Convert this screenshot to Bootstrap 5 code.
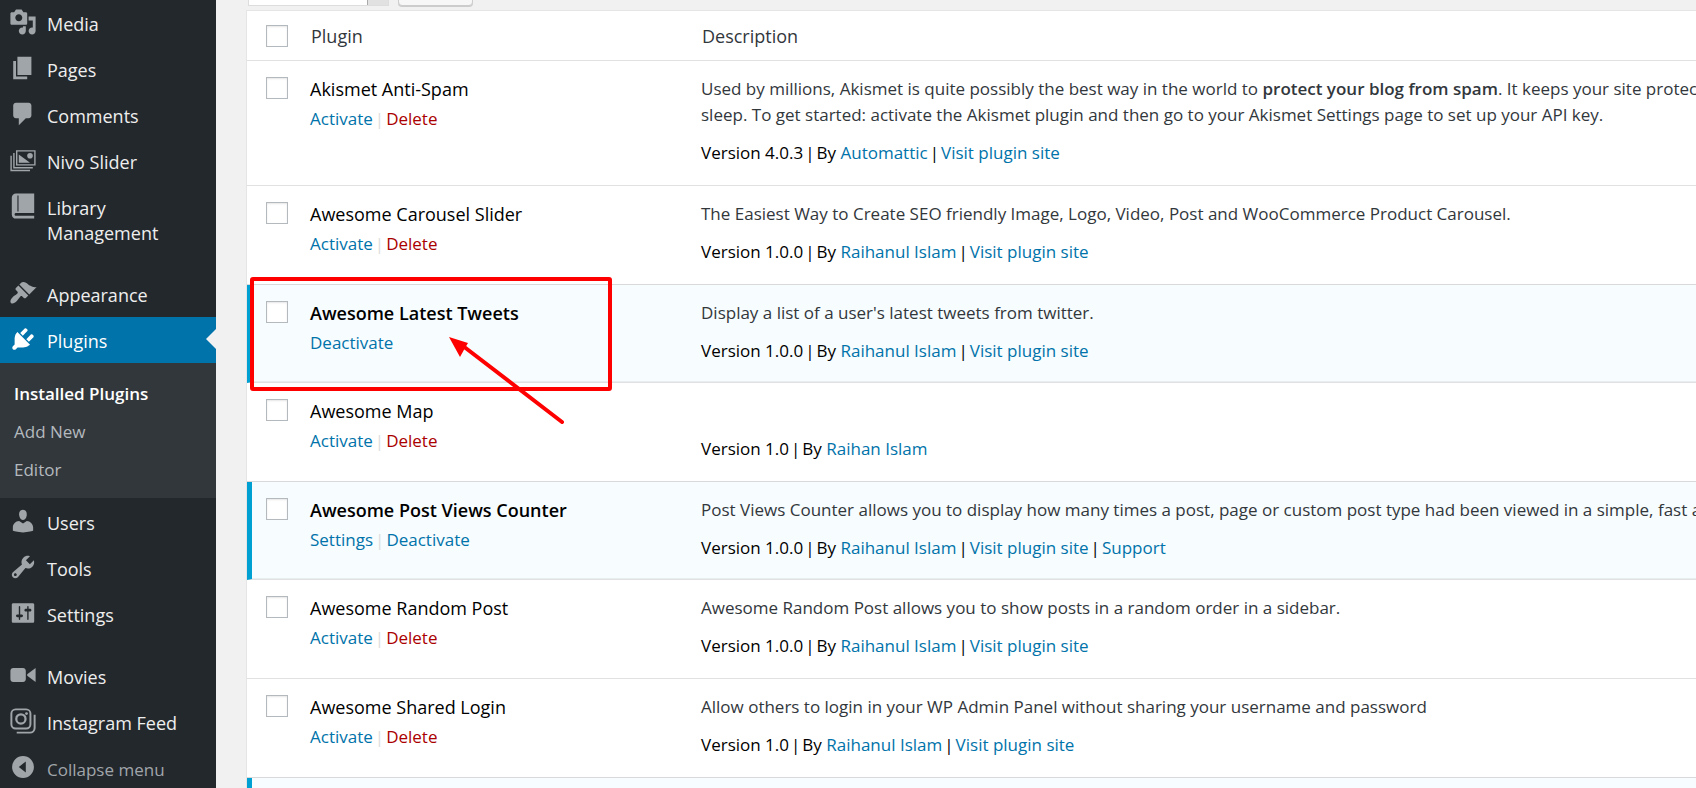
<!DOCTYPE html>
<html lang="en">
<head>
<meta charset="utf-8">
<meta name="viewport" content="width=device-width, initial-scale=1">
<title>Plugins</title>
<link href="https://cdn.jsdelivr.net/npm/bootstrap@5.3.0/dist/css/bootstrap.min.css" rel="stylesheet">
<style>
  body { font-family: "Open Sans", "Noto Sans", sans-serif; font-size: 17px; line-height: 26px; color: #32373c; background: #f1f1f1; }
  a { text-decoration: none; color: #0073aa; }
  .shell { height: 100vh; }

  /* Sidebar */
  .admin-menu { width: 216px; background: #23282d; font-size: 18px; line-height: 25px; }
  .menu-item { display: flex; align-items: flex-start; padding: 12px 8px 9px 9px; color: #eee; position: relative; }
  .menu-item svg { width: 28px; height: 28px; margin: -4px 10px 0 0; flex: none; fill: #a0a5aa; }
  .menu-item.current { background: #0073aa; color: #fff; }
  .menu-item.current svg { fill: #fff; }
  .menu-item.current::after { content: ""; position: absolute; right: 0; top: 12px; border: 10px solid transparent; border-right-color: #f1f1f1; border-left: 0; }
  .menu-gap { height: 16px; }
  .submenu { background: #32373c; font-size: 17px; padding: 12px 14px 9px; margin-bottom: 1px; }
  .submenu a { display: block; line-height: 38px; color: #b4b9be; }
  .submenu a.current { color: #fff; font-weight: 600; }
  .collapse-btn { border: 0; background: none; width: 100%; text-align: left; color: #a0a5aa; font-size: 17px; }

  /* Bulk actions */
  .bulk-bar { height: 10px; padding: 0 0 4px 2px; gap: 9px; }
  .bulk-select { width: 141px; height: 39px; border: 1px solid #ddd; border-radius: 0; background: linear-gradient(#aaa, #aaa) right 20px top 0 / 1px 100% no-repeat, linear-gradient(#e1e1e1, #e1e1e1) right / 20px 100% no-repeat #fff; appearance: none; }
  .bulk-apply { width: 75px; height: 39px; border: 1px solid #ccc; border-radius: 4px; background: #f7f7f7; box-shadow: 0 1px 0 #ccc; color: #555; }

  /* Plugin list */
  .list-area { padding-left: 30px; }
  .plugin-table { width: 120%; table-layout: fixed; border-collapse: separate; border-spacing: 0; background: #fff; border: 1px solid #e5e5e5; white-space: nowrap; }
  .col-tick { width: 53px; }
  .col-name { width: 391px; }
  .plugin-table th, .plugin-table td { vertical-align: top; font-weight: 400; border-bottom: 1px solid #e1e1e1; padding: 15px 10px 19px; }
  .plugin-table thead th { padding: 13px 11px 11px; font-size: 18px; line-height: 25px; }
  .plugin-table .tick { padding: 16px 0 0 19px; }
  .plugin-table thead .tick { padding-top: 14px; }
  .tick input { display: block; appearance: none; width: 22px; height: 22px; border: 1px solid #b4b9be; background: #fff; box-shadow: inset 0 1px 2px rgba(0,0,0,.1); margin: 0; }
  .plugin-table .on > * { background: #f7fcfe; padding-bottom: 18px; box-shadow: inset 0 -1px 0 rgba(0,0,0,.06), 0 -1px 0 rgba(0,0,0,.03); }
  .plugin-table .on .tick { border-left: 5px solid #00a0d2; padding-left: 14px; }
  .plugin-name { font-size: 18px; line-height: 27px; color: #000; padding-bottom: 3px; }
  .on .plugin-name { font-weight: 600; }
  .row-links { color: #ddd; }
  .row-links .delete { color: #a00; }
  .bar { margin: 0 2px; }
  .about { min-height: 26px; margin-bottom: 12px; }
  .meta { color: #000; }
  .callout { position: absolute; left: -52px; top: -9px; width: 366px; height: 154px; pointer-events: none; z-index: 2; }
</style>
</head>
<body>
<div class="shell d-flex overflow-hidden">
  <nav class="admin-menu flex-shrink-0" aria-label="Main menu">
    <a class="menu-item" href="#"><svg viewBox="0 0 20 20"><path d="M13 11V4c0-.55-.45-1-1-1h-1.670L9 1H5L3.670 3H2c-.55 0-1 .45-1 1v7c0 .55.45 1 1 1h10c.55 0 1-.45 1-1zM7 4.500c1.380 0 2.500 1.120 2.500 2.500S8.380 9.500 7 9.500 4.500 8.380 4.500 7 5.620 4.500 7 4.500zM14 6h5v10.500c0 1.380-1.120 2.500-2.500 2.500S14 17.880 14 16.500s1.120-2.500 2.500-2.500c.17 0 .34.02.5.05V9h-3V6zm-4 8.050V13h2v3.500c0 1.380-1.120 2.500-2.500 2.500S7 17.880 7 16.500 8.120 14 9.500 14c.17 0 .34.02.5.05z"/></svg>Media</a>
    <a class="menu-item" href="#"><svg viewBox="0 0 20 20"><path d="M6 15V2h10v13H6zm-1 1h8v2H3V5h2v11z"/></svg>Pages</a>
    <a class="menu-item" href="#"><svg viewBox="0 0 20 20"><path d="M5 2h9c1.1 0 2 .9 2 2v7c0 1.100-.9 2-2 2h-2l-5 5v-5H5c-1.100 0-2-.9-2-2V4c0-1.100.9-2 2-2z"/></svg>Comments</a>
    <a class="menu-item" href="#"><svg viewBox="0 0 20 20"><path fill-rule="evenodd" d="M5 3h14v11H5zM6 4v9h12V4z"/><path d="M7 12V6l8 6zM3 5h1v10h13v1H3zM1 7h1v10h13v1H1z"/><circle cx="15" cy="7" r="2"/></svg>Nivo Slider</a>
    <a class="menu-item" href="#"><svg viewBox="0 0 20 20"><path fill-rule="evenodd" d="M5 1h13v14H5c-.6 0-1 .4-1 1s.4 1 1 1h13v2H5c-1.700 0-3-1.300-3-3V4c0-1.700 1.300-3 3-3zM6 2.500v11.500h.8V2.500z"/></svg><span>Library<br>Management</span></a>
    <div class="menu-gap"></div>
    <a class="menu-item" href="#"><svg viewBox="0 0 20 20"><path d="M14.480 11.060L7.410 3.990l1.500-1.500c.5-.56 2.300-.47 3.510.32 1.210.8 1.430 1.280 2.910 2.100 1.180.64 2.450 1.260 4.450.85zm-.71.71L6.700 4.700 4.930 6.470c-.39.39-.39 1.020 0 1.410l1.060 1.060c.39.39.39 1.030 0 1.420-.6.6-1.430 1.110-2.210 1.690-.35.26-.7.53-1.010.84C1.430 14.230.4 16.080 1.400 17.070c.99 1 2.840-.03 4.180-1.360.31-.31.58-.66.85-1.020.57-.78 1.080-1.610 1.690-2.210.39-.39 1.020-.39 1.410 0l1.060 1.060c.39.39 1.020.39 1.410 0z"/></svg>Appearance</a>
    <a class="menu-item current" href="#" aria-current="page"><svg viewBox="0 0 20 20"><path d="M13.110 4.360L9.870 7.600 8 5.730l3.240-3.240c.35-.34 1.050-.2 1.560.32.52.51.66 1.210.31 1.550zm-8 1.770l.91-1.120 9.010 9.010-1.190.84c-.71.71-2.630 1.160-3.820 1.160H6.140L4.900 17.260c-.59.59-1.540.59-2.120 0-.59-.58-.59-1.530 0-2.120l1.240-1.240v-3.880c0-1.130.4-3.190 1.090-3.890zm7.260 3.970l3.240-3.240c.34-.35 1.040-.21 1.550.31.52.51.66 1.210.31 1.550l-3.240 3.250z"/></svg>Plugins</a>
    <div class="submenu">
      <a class="current" href="#">Installed Plugins</a>
      <a href="#">Add New</a>
      <a href="#">Editor</a>
    </div>
    <a class="menu-item" href="#"><svg viewBox="0 0 20 20"><path d="M10 9.250c-2.270 0-2.730-3.440-2.730-3.440C7 4.020 7.820 2 9.970 2c2.160 0 2.980 2.020 2.710 3.810 0 0-.41 3.440-2.680 3.440zm0 2.570L12.720 10c2.390 0 4.520 2.330 4.520 4.530v2.490s-3.650 1.130-7.240 1.130c-3.650 0-7.240-1.130-7.240-1.130v-2.490c0-2.250 1.940-4.480 4.470-4.480z"/></svg>Users</a>
    <a class="menu-item" href="#"><svg viewBox="0 0 20 20"><path d="M16.680 9.770c-1.340 1.340-3.300 1.670-4.950.99l-5.410 6.520c-.99.99-2.590.99-3.580 0s-.99-2.590 0-3.570l6.520-5.420c-.68-1.650-.35-3.610.99-4.950 1.280-1.280 3.120-1.620 4.720-1.060l-2.890 2.890 2.820 2.820 2.860-2.870c.53 1.580.18 3.390-1.080 4.650zM3.810 16.210c.4.39 1.040.39 1.430 0 .4-.4.4-1.040 0-1.430-.39-.4-1.030-.4-1.430 0-.39.39-.39 1.030 0 1.430z"/></svg>Tools</a>
    <a class="menu-item" href="#"><svg viewBox="0 0 20 20"><path d="M18 16V4c0-.55-.45-1-1-1H3c-.55 0-1 .45-1 1v12c0 .55.45 1 1 1h14c.55 0 1-.45 1-1zM8 11h1c.55 0 1 .45 1 1s-.45 1-1 1H8v1.500c0 .28-.22.5-.5.5s-.5-.22-.5-.5V13H6c-.55 0-1-.45-1-1s.45-1 1-1h1V5.500c0-.28.22-.5.5-.5s.5.22.5.5V11zm5-2h-1c-.55 0-1-.45-1-1s.45-1 1-1h1V5.500c0-.28.22-.5.5-.5s.5.22.5.5V7h1c.55 0 1 .45 1 1s-.45 1-1 1h-1v5.500c0 .28-.22.5-.5.5s-.5-.22-.5-.5V9z"/></svg>Settings</a>
    <div class="menu-gap"></div>
    <a class="menu-item" href="#"><svg viewBox="0 0 20 20"><path d="M12 13V7c0-1.100-.9-2-2-2H3c-1.100 0-2 .9-2 2v6c0 1.100.9 2 2 2h7c1.100 0 2-.9 2-2zm1-2.500l6 4.500V5l-6 4.500v1z"/></svg>Movies</a>
    <a class="menu-item" href="#"><svg viewBox="0 0 20 20"><g fill="none" stroke="#a0a5aa" stroke-width="1.400"><rect x="1.700" y="1.700" width="13.600" height="13.600" rx="3"/><circle cx="8.500" cy="8.500" r="3.300" stroke-width="1.600"/><path d="M5.500 18.300H15a3.300 3.300 0 0 0 3.300-3.300V5.500"/></g><circle cx="12.500" cy="4.700" r="1"/></svg>Instagram Feed</a>
    <button type="button" class="menu-item collapse-btn"><svg viewBox="0 0 20 20"><path fill-rule="evenodd" d="M10 2.200a7.800 7.800 0 1 1 0 15.600 7.800 7.800 0 0 1 0-15.600zM12 6l-5 4 5 4z"/></svg>Collapse menu</button>
  </nav>

  <main class="list-area flex-grow-1 overflow-hidden">
    <div class="bulk-bar d-flex align-items-end">
      <select class="bulk-select" aria-label="Bulk actions"><option></option></select>
      <button type="button" class="bulk-apply" aria-label="Apply"></button>
    </div>
    <table class="plugin-table">
      <colgroup><col class="col-tick"><col class="col-name"><col></colgroup>
      <thead>
        <tr><th class="tick"><input type="checkbox" aria-label="Select all"></th><th scope="col">Plugin</th><th scope="col">Description</th></tr>
      </thead>
      <tbody>
        <tr>
          <td class="tick"><input type="checkbox" aria-label="Select Akismet Anti-Spam"></td>
          <td><div class="plugin-name">Akismet Anti-Spam</div><div class="row-links"><a href="#">Activate</a><span class="bar">|</span><a class="delete" href="#">Delete</a></div></td>
          <td><div class="about">Used by millions, Akismet is quite possibly the best way in the world to <strong class="fw-semibold">protect your blog from spam</strong>. It keeps your site protected even while you<br>sleep. To get started: activate the Akismet plugin and then go to your Akismet Settings page to set up your API key.</div><div class="meta">Version 4.0.3<span class="bar">|</span>By <a href="#">Automattic</a><span class="bar">|</span><a href="#">Visit plugin site</a></div></td>
        </tr>
        <tr>
          <td class="tick"><input type="checkbox" aria-label="Select Awesome Carousel Slider"></td>
          <td><div class="plugin-name">Awesome Carousel Slider</div><div class="row-links"><a href="#">Activate</a><span class="bar">|</span><a class="delete" href="#">Delete</a></div></td>
          <td><div class="about">The Easiest Way to Create SEO friendly Image, Logo, Video, Post and WooCommerce Product Carousel.</div><div class="meta">Version 1.0.0<span class="bar">|</span>By <a href="#">Raihanul Islam</a><span class="bar">|</span><a href="#">Visit plugin site</a></div></td>
        </tr>
        <tr class="on">
          <td class="tick"><input type="checkbox" aria-label="Select Awesome Latest Tweets"></td>
          <td class="position-relative"><div class="plugin-name">Awesome Latest Tweets</div><div class="row-links"><a href="#">Deactivate</a></div>
            <svg class="callout" viewBox="0 0 366 154" aria-hidden="true"><rect x="4" y="3" width="358" height="110" rx="1" fill="none" stroke="#f00" stroke-width="4"/><path d="M215 70L314 146" stroke="#f00" stroke-width="4" stroke-linecap="round"/><path d="M201 61l19 6-3 5-5 9z" fill="#f00"/></svg></td>
          <td><div class="about">Display a list of a user's latest tweets from twitter.</div><div class="meta">Version 1.0.0<span class="bar">|</span>By <a href="#">Raihanul Islam</a><span class="bar">|</span><a href="#">Visit plugin site</a></div></td>
        </tr>
        <tr>
          <td class="tick"><input type="checkbox" aria-label="Select Awesome Map"></td>
          <td><div class="plugin-name">Awesome Map</div><div class="row-links"><a href="#">Activate</a><span class="bar">|</span><a class="delete" href="#">Delete</a></div></td>
          <td><div class="about"></div><div class="meta">Version 1.0<span class="bar">|</span>By <a href="#">Raihan Islam</a></div></td>
        </tr>
        <tr class="on">
          <td class="tick"><input type="checkbox" aria-label="Select Awesome Post Views Counter"></td>
          <td><div class="plugin-name">Awesome Post Views Counter</div><div class="row-links"><a href="#">Settings</a><span class="bar">|</span><a href="#">Deactivate</a></div></td>
          <td><div class="about">Post Views Counter allows you to display how many times a post, page or custom post type had been viewed in a simple, fast and reliable way.</div><div class="meta">Version 1.0.0<span class="bar">|</span>By <a href="#">Raihanul Islam</a><span class="bar">|</span><a href="#">Visit plugin site</a><span class="bar">|</span><a href="#">Support</a></div></td>
        </tr>
        <tr>
          <td class="tick"><input type="checkbox" aria-label="Select Awesome Random Post"></td>
          <td><div class="plugin-name">Awesome Random Post</div><div class="row-links"><a href="#">Activate</a><span class="bar">|</span><a class="delete" href="#">Delete</a></div></td>
          <td><div class="about">Awesome Random Post allows you to show posts in a random order in a sidebar.</div><div class="meta">Version 1.0.0<span class="bar">|</span>By <a href="#">Raihanul Islam</a><span class="bar">|</span><a href="#">Visit plugin site</a></div></td>
        </tr>
        <tr>
          <td class="tick"><input type="checkbox" aria-label="Select Awesome Shared Login"></td>
          <td><div class="plugin-name">Awesome Shared Login</div><div class="row-links"><a href="#">Activate</a><span class="bar">|</span><a class="delete" href="#">Delete</a></div></td>
          <td><div class="about">Allow others to login in your WP Admin Panel without sharing your username and password</div><div class="meta">Version 1.0<span class="bar">|</span>By <a href="#">Raihanul Islam</a><span class="bar">|</span><a href="#">Visit plugin site</a></div></td>
        </tr>
        <tr class="on"><td class="tick"></td><td></td><td></td></tr>
      </tbody>
    </table>
  </main>
</div>
<script src="https://cdn.jsdelivr.net/npm/bootstrap@5.3.0/dist/js/bootstrap.bundle.min.js"></script>
</body>
</html>
